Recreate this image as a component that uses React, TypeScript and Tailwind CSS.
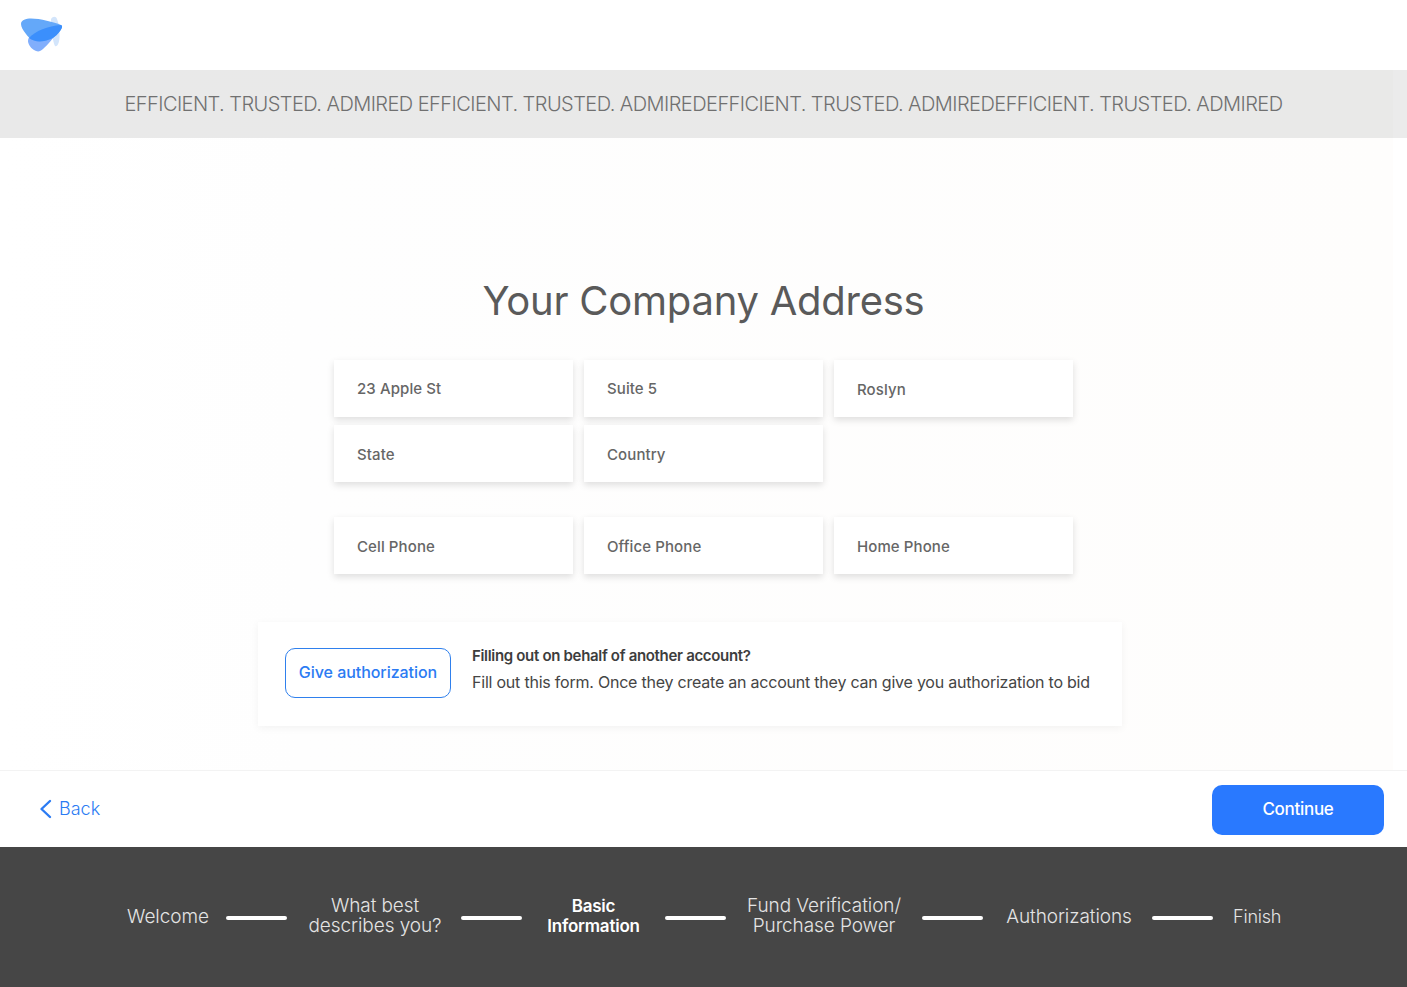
const sans = 'font-["Inter",sans-serif]';

function Logo() {
  return (
    <svg width="44" height="38" viewBox="0 0 44 38" className="block">
      <path d="M31 3C33 0 36 0 37 3C39 8 40 14 39.5 22C39 28 37 31 35 30C33 27 31 12 31 3Z" fill="#d3e5fb" />
      <path d="M10 20C16 14 30 12 36 18C33 22 28 29 23 33C20 36 17 36 14 34C10 32 8 27 8 25C8 23 9 21 10 20Z" fill="#81aefc" />
      <path d="M1 8C1 4 6 2.5 11 2.5C20 2.5 34 6 41 9C43 10 42 12 40 15C36 21 30 24 24 25C16 26 10 24 6 18C3 14 1 11 1 8Z" fill="#64a8f9" />
      <path d="M9 22C15 15 28 10 41 9C43 10 42 12 40 15C36 21 30 24 24 25C18 26 13 25 9 22Z" fill="#3b8ffc" />
    </svg>
  );
}

function Field({ label, pad }: { label: string; pad: string }) {
  return (
    <div className={`flex h-[57px] w-[239px] items-center bg-white pl-[23px] text-[15px] font-medium tracking-[0.1px] text-[#666666] shadow-[0_3px_7px_rgba(0,0,0,0.13)] ${pad} ${sans}`}>
      {label}
    </div>
  );
}

function Line() {
  return <div className="mt-[1px] h-1 w-[61px] shrink-0 rounded-full bg-white" />;
}

function Step({ children, bold, small, two, width }: { children: React.ReactNode; bold?: boolean; small?: boolean; two?: boolean; width: string }) {
  const look = bold
    ? "text-[17px] font-semibold tracking-[-0.2px] text-white"
    : small
      ? "text-[18px] font-light tracking-[-0.2px] text-[#e4e4e4]"
      : "text-[19px] font-light tracking-[-0.08px] text-[#e4e4e4]";
  return (
    <div className={`${width} ${two ? "-mt-[2px]" : ""} shrink-0 text-center leading-5 whitespace-nowrap ${look} ${sans}`}>
      {children}
    </div>
  );
}

export default function App() {
  return (
    <div className={`flex h-[987px] w-[1407px] flex-col overflow-hidden bg-white ${sans}`}>
      <header className="flex h-[70px] shrink-0 items-center pl-5">
        <Logo />
      </header>
      <div className="flex h-[68px] shrink-0 items-center justify-center bg-[linear-gradient(90deg,#e9e9e9_0,#e9e9e8_1393px,#ebebeb_1393px)] text-[20px] font-light tracking-[-0.55px] whitespace-nowrap text-[#707070]">
        EFFICIENT. TRUSTED. ADMIRED EFFICIENT. TRUSTED. ADMIREDEFFICIENT. TRUSTED. ADMIREDEFFICIENT. TRUSTED. ADMIRED
      </div>
      <main className="flex h-[633px] shrink-0 flex-col border-b border-[#f3f3f3] bg-[linear-gradient(90deg,#ffffff_0,#fefefe_300px,#fefdfc_1393px,#ffffff_1393px)] pt-[138px]">
        <h1 className="text-center text-[40px] leading-[50px] font-normal tracking-[-0.25px] text-[#5a5a5a]">Your Company Address</h1>
        <div className="mt-[34px] ml-[334px] flex flex-col">
          <div className="flex gap-[11px]">
            <Field label="23 Apple St" pad="pt-[1px]" />
            <Field label="Suite 5" pad="pt-[1px]" />
            <Field label="Roslyn" pad="pt-[3px]" />
          </div>
          <div className="mt-[8px] flex gap-[11px]">
            <Field label="State" pad="pt-[3px]" />
            <Field label="Country" pad="pt-[3px]" />
          </div>
          <div className="mt-[35px] flex gap-[11px]">
            <Field label="Cell Phone" pad="pt-[3px]" />
            <Field label="Office Phone" pad="pt-[3px]" />
            <Field label="Home Phone" pad="pt-[3px]" />
          </div>
        </div>
        <div className="mt-12 ml-[258px] flex h-[104px] w-[864px] items-center gap-[21px] bg-white pl-[27px] shadow-[0_2px_8px_rgba(0,0,0,0.05)]">
          <div className="mb-[2px] flex h-[50px] w-[166px] items-center justify-center rounded-[10px] border border-[#2f80ed] pb-[2px] text-[16px] font-medium tracking-[-0.05px] text-[#2b7bf3]">
            Give authorization
          </div>
          <div className="mb-[10px] flex flex-col gap-[9px] text-[15px] leading-[18px] whitespace-nowrap">
            <div className="font-semibold tracking-[-0.32px] text-[#3d3d3d]">Filling out on behalf of another account?</div>
            <div className="-mt-[1px] text-[16px] tracking-[-0.22px] text-[#454545]">Fill out this form. Once they create an account they can give you authorization to bid</div>
          </div>
        </div>
      </main>
      <nav className="flex h-[76px] shrink-0 items-center justify-between pt-[2px] pr-[23px] pl-[39px]">
        <div className="mb-[2px] flex items-center gap-[7px] text-[#2b7bf3]">
          <svg width="13" height="20" viewBox="0 0 13 20" fill="none" stroke="currentColor" strokeWidth="2.4" strokeLinecap="round" strokeLinejoin="round">
            <path d="M11 2 2.5 10 11 18" />
          </svg>
          <span className="mb-[2px] text-[18px] font-light">Back</span>
        </div>
        <div className="flex h-[50px] w-[172px] items-center justify-center rounded-[10px] bg-[#2979ff] text-[17px] font-medium tracking-[-0.3px] text-white">
          Continue
        </div>
      </nav>
      <footer className="flex flex-1 items-center bg-[#464646] pl-[126px]">
        <Step width="w-[84px]">Welcome</Step>
        <div className="ml-4"><Line /></div>
        <div className="ml-[21px]"><Step two width="w-[134px]">What best<br />describes you?</Step></div>
        <div className="ml-[19px]"><Line /></div>
        <div className="ml-[24px]"><Step two bold width="w-[95px]">Basic<br />Information</Step></div>
        <div className="ml-[24px]"><Line /></div>
        <div className="ml-[20px]"><Step two width="w-[156px]">Fund Verification/<br />Purchase Power</Step></div>
        <div className="ml-[20px]"><Line /></div>
        <div className="ml-[23px]"><Step width="w-[126px]">Authorizations</Step></div>
        <div className="ml-[20px]"><Line /></div>
        <div className="ml-[20px]"><Step small width="w-[48px]">Finish</Step></div>
      </footer>
    </div>
  );
}
